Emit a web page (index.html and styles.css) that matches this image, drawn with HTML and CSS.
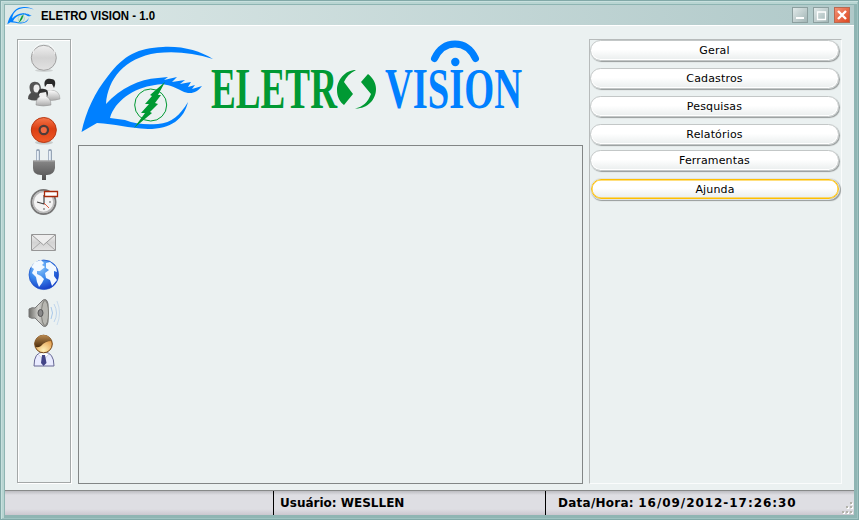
FILE: index.html
```html
<!DOCTYPE html>
<html lang="pt-BR">
<head>
<meta charset="utf-8">
<title>ELETRO VISION - 1.0</title>
<link rel="stylesheet" href="styles.css">
</head>
<body>
<svg class="defs" width="0" height="0" aria-hidden="true">
  <defs>
    <linearGradient id="silver" x2="0" y2="1"><stop stop-color="#efefef"/><stop offset=".5" stop-color="#d3d3d3"/><stop offset="1" stop-color="#e2e2e2"/></linearGradient>
    <linearGradient id="red" x2="0" y2="1"><stop stop-color="#f5764a"/><stop offset=".45" stop-color="#dc4014"/><stop offset="1" stop-color="#ef5a28"/></linearGradient>
    <linearGradient id="dark" x2="0" y2="1"><stop stop-color="#888"/><stop offset="1" stop-color="#505050"/></linearGradient>
    <linearGradient id="shirt" x2="0" y2="1"><stop stop-color="#fff"/><stop offset="1" stop-color="#aaa"/></linearGradient>
    <linearGradient id="metal"><stop stop-color="#6c6c68"/><stop offset=".5" stop-color="#d0d0cc"/><stop offset="1" stop-color="#84847e"/></linearGradient>
    <radialGradient id="ocean" cx=".35" cy=".25" r=".8"><stop stop-color="#8fc8fa"/><stop offset=".5" stop-color="#3a88ec"/><stop offset="1" stop-color="#1238c4"/></radialGradient>
    <radialGradient id="skin" cx=".5" cy=".85" r=".8"><stop stop-color="#fff0b8"/><stop offset="1" stop-color="#dd8b35"/></radialGradient>
    <linearGradient id="hair" x2="0" y2="1"><stop stop-color="#b98a50"/><stop offset="1" stop-color="#4c2c0b"/></linearGradient>
    <symbol id="eye" viewBox="80 44 134 90">
      <path fill="#0080ff" d="M81.500 132C86 111 95 92 108 76C124 55 138 48 163 47C183 46 200 51 213 59C194 53 176 51 157 53C124 58 108 79 106 104C121 88 139 79 158 78L168 77L164 80L177 77L172 82L185 80L180 84L191 82L188 87L195 85L192 89L202 86C197 93 190 95 182 91C172 86 164 83 155 85C133 88 115 101 110 118L125 120C135 124 146 125 158 124C172 123 180 115 188 102C184 119 171 129 148 129C128 128 115 124 97 123Z"/>
      <circle cx="150.700" cy="105" r="16" fill="none" stroke="#009933"/>
      <path fill="#009933" d="M165 82L158 95L161 95L155 103L158 104L150 112L152 113L134 128L145 113L141 113L149 104L145 104L152 96L150 95Z"/>
    </symbol>
  </defs>
</svg>
<div class="window">
  <header class="titlebar">
    <svg class="app-icon" width="27" height="19"><use href="#eye"/></svg>
    <svg class="title" width="118" height="20"><text x="1" y="15" textLength="114" lengthAdjust="spacingAndGlyphs">ELETRO VISION - 1.0</text></svg>
    <div class="controls">
      <button aria-label="Minimizar"><svg width="16" height="16"><path d="M4 11H12" stroke="#fff" stroke-width="2"/></svg></button>
      <button aria-label="Maximizar"><svg width="16" height="16"><path d="M4.500 5H12.500V12.500H4.500Z" fill="none" stroke="#fff" stroke-width="1.300"/></svg></button>
      <button class="close" aria-label="Fechar"><svg width="16" height="16"><path d="M4 4L12 12M12 4L4 12" stroke="#fff" stroke-width="2.400"/></svg></button>
    </div>
  </header>
  <main>
    <nav class="tools">
      <svg height="35" viewBox="18 40 52 35"><ellipse cx="44" cy="70.5" rx="9" ry="1.5" fill="#cfd3d3"/><circle cx="43.8" cy="57.8" r="12.5" fill="url(#silver)" stroke="#a0a0a0"/><path d="M33 54A11 11 0 0 1 55 54" fill="none" stroke="#fff" opacity=".7"/></svg>
      <svg height="35" viewBox="18 75 52 35">
        <path d="M28 99Q28 92 35 92Q41 92 41 99Q35 102 28 99Z" fill="#4d4d4d"/><path d="M31 93C27 84 32 81 36 82C41 82 42 89 40 94Z" fill="#555"/><ellipse cx="36.5" cy="88.500" rx="3" ry="4" fill="#eee"/>
        <path d="M42 99Q42 90 50 90Q60 90 60 99Q52 102 42 99Z" fill="url(#shirt)" stroke="#999" stroke-width=".5"/><circle cx="50" cy="86" r="4.500" fill="#eee"/><path d="M45 87C43 80 47 78 51 79C56 79 56 84 54 88L52 84L47 84Z" fill="#292929"/>
        <path d="M36 105Q36 96 43 96Q51 96 51 105Q43 107 36 105Z" fill="url(#shirt)" stroke="#888" stroke-width=".5"/><circle cx="43" cy="94" r="4" fill="#f0f0f0"/><path d="M38.500 95C37 89 41 88 44 89C48 89 49 93 47 97L46 92L40 93Z" fill="#333"/>
      </svg>
      <svg height="37" viewBox="18 110 52 37"><ellipse cx="44" cy="142.500" rx="9" ry="2" fill="#c7cccc"/><circle cx="43.800" cy="130" r="12.500" fill="url(#red)" stroke="#b73712"/><circle cx="43.800" cy="130" r="4.200" fill="#ef6b43" stroke="#4c3c3a" stroke-width="2.200"/></svg>
      <svg height="36" viewBox="18 147 52 36"><path d="M38 162V151M50 162V151" stroke="#96a5b6" stroke-width="4" stroke-linecap="round"/><path d="M37.800 162V151M49.800 162V151" stroke="#e8f0f8" stroke-width="2"/><path d="M33 160.500H55V168Q54 175 47 175H46V180H42V175H41Q33 175 33 168Z" fill="url(#dark)"/><path d="M33.500 161H54.500" stroke="#aaa"/></svg>
      <svg height="40" viewBox="18 183 52 40"><circle cx="43.500" cy="202" r="12" fill="#eee" stroke="#777" stroke-width="2"/><circle cx="43.500" cy="202" r="10.400" fill="#f4f4f4" stroke="#bbb" stroke-width="1.500"/><path d="M44 195V204L37 202" fill="none" stroke="#444" stroke-width="1.200"/><path d="M44 203L49 208" stroke="#e05b40"/><path d="M43 208H45V210H43ZM49 201H51V203H49Z" fill="#aaa"/><path d="M44.500 191.500H57.500V196.500H44.500Z" fill="#fff" stroke="#a82a0a" stroke-width="1.300"/></svg>
      <svg height="34" viewBox="18 223 52 34"><path d="M31.500 234.500H55.500V250.500H31.500Z" fill="url(#silver)" stroke="#969696"/><path d="M32 250L41 242M55 250L46 242" stroke="#aaa"/><path d="M32 235L43.500 245L55 235" fill="#eee" stroke="#9a9a9a"/></svg>
      <svg height="36" viewBox="18 257 52 36"><circle cx="43.800" cy="274.800" r="14.800" fill="url(#ocean)" stroke="#1c52c8" stroke-width=".7"/><path d="M31 267L35 262L41 260L44 263L42 265L45 267L40 271L37 271L37 274L41 276L44 279L42 283L39 287L37 282L36 277L32 273L34 269ZM46 263L50 262L56 267L57 272L54 271L54 276L57 280L52 286L50 280L46 278L45 273L49 270L46 268Z" fill="#f3f9ff"/></svg>
      <svg height="38" viewBox="18 293 52 38"><path d="M29 309Q32 307 35 308L43 300Q47 298 48 304V322Q47 328 43 326L35 318Q31 319 29 317Z" fill="url(#metal)" stroke="#777"/><ellipse cx="45" cy="313" rx="3.500" ry="12.500" fill="#b7b7b1" stroke="#80807a"/><ellipse cx="40.500" cy="313" rx="2.500" ry="3.500" fill="#888" stroke="#555"/><g fill="none" stroke="#a9c8ea"><path d="M51 307Q54 313 51 319" /><path d="M54 304Q59 313 54 322" opacity=".7"/><path d="M57 301Q62 313 57 325" opacity=".5"/></g></svg>
      <svg height="39" viewBox="18 331 52 39"><path d="M34 366Q34 352 43.500 352Q54 352 54 366Z" fill="#e9ebff" stroke="#666794"/><path d="M38 354L43.500 360L49 354L43.500 352Z" fill="#fff" stroke="#aaaec7" stroke-width=".5"/><path d="M42 355H45L46.500 363L43.500 366L41 363Z" fill="#424487"/><circle cx="43.500" cy="344" r="8.800" fill="url(#skin)" stroke="#744414"/><path d="M34.600 343A9 9 0 0 1 52 341Q45 341 41 346Q38 348 35.500 347Z" fill="url(#hair)"/></svg>
    </nav>
    <section class="center">
      <svg class="logo" width="505" height="106" viewBox="78 39 505 106">
        <use href="#eye" x="80" y="44" width="134" height="90"/>
        <g class="wordmark">
          <text class="green" x="211" y="108" textLength="126" lengthAdjust="spacingAndGlyphs">ELETR</text>
          <text class="blue" x="385" y="108" textLength="137" lengthAdjust="spacingAndGlyphs">VISION</text>
        </g>
        <path fill="#009933" d="M356 70C345 70 337 80 337 90C337 97 340 102 344 105L353 94L344 82C346 77 350 73 356 70ZM368 74L361 82L371 94C368 102 363 107 355 108.500C367 109 376 100 376 89C376 83 373 78 368 74Z"/>
        <path d="M434.500 58.500C439 49 446 44 455 44S471 49 475.500 58.500" fill="none" stroke="#0080ff" stroke-width="7" stroke-linecap="round"/>
        <circle cx="455.300" cy="62" r="4.200" fill="#0080ff"/>
      </svg>
      <div class="canvas"></div>
    </section>
    <aside class="menu">
      <button>Geral</button>
      <button>Cadastros</button>
      <button>Pesquisas</button>
      <button>Relatórios</button>
      <button class="tight">Ferramentas</button>
      <button class="focused">Ajunda</button>
    </aside>
  </main>
  <footer>
    <div class="cell"></div>
    <div class="cell user"><span>Usuário: WESLLEN</span></div>
    <div class="cell date">Data/Hora: <span class="stamp">16/09/2012-17:26:30</span></div>
    <svg class="grip" width="13" height="14"><path fill="#fff" d="M10 2h2v2h-2zM6 6h2v2h-2zM10 6h2v2h-2zM2 11h2v2h-2zM6 11h2v2h-2zM10 11h2v2h-2z"/><path fill="#b2b2aa" d="M9 1h2v2h-2zM5 5h2v2h-2zM9 5h2v2h-2zM1 10h2v2h-2zM5 10h2v2h-2zM9 10h2v2h-2z"/></svg>
  </footer>
</div>
</body>
</html>
```
FILE: styles.css
```css
* { box-sizing: border-box; }
body { margin: 0; font-family: "DejaVu Sans", Verdana, sans-serif; }
svg { display: block; flex: none; }
.defs { position: absolute; }
button { font: inherit; padding: 0; }

.window {
  width: 859px;
  height: 520px;
  padding: 4px;
  background: #add0cd;
  border: 1px solid #82a9a8;
  box-shadow: inset 1px 1px #c8e0de, inset -1px -1px #9fc3c1, inset 3px 3px #b8d5d2, inset 4px 4px #8fb5b3, inset -4px -4px #8fb5b3;
  display: flex;
  flex-direction: column;
}
.titlebar {
  height: 20px;
  flex: none;
  display: flex;
  align-items: center;
  padding: 0 4px 0 2px;
  background: linear-gradient(90deg, #dce8e7, #b0c9c9);
}
.app-icon { width: 27px; }
.title { margin-left: 6px; font: bold 12px "Liberation Sans", Arial, sans-serif; overflow: visible; }
.controls { margin-left: auto; display: flex; gap: 5px; }
.controls button {
  width: 16px;
  height: 16px;
  border: 0;
  box-shadow: inset 0 0 0 1px #8c9f9f;
  background: linear-gradient(135deg, #e4ecec, #9eb2b2);
}
.controls .close { background: linear-gradient(135deg, #f4977b, #dc431b); box-shadow: inset 0 0 0 1px #b8684f; }

main {
  height: 465px;
  flex: none;
  display: flex;
  align-items: flex-start;
  padding: 13px 12px 0;
  background: #ebf1f1;
  border-top: 1px solid #fff;
}
.tools {
  width: 54px;
  height: 444px;
  flex: none;
  border: 1px solid #a4a8a8;
  box-shadow: 1px 1px #fff, inset 1px 1px #fff;
}
.tools svg { width: 52px; }
.center { width: 505px; margin-left: 7px; flex: none; }
.wordmark { font: bold 58px "Liberation Serif", "Times New Roman", serif; }
.green { fill: #009933; }
.blue { fill: #0080ff; }
.canvas { height: 339px; border: 1px solid #828686; }
.menu {
  width: 253px;
  height: 445px;
  margin-left: 6px;
  flex: none;
  border: 1px solid;
  border-color: #b7bbbb #fafcfc #fafcfc #b7bbbb;
  display: flex;
  flex-direction: column;
}
.menu button {
  width: 249px;
  height: 21px;
  flex: none;
  margin-bottom: 7px;
  border: 1px solid #c3c7c7;
  border-radius: 11px;
  background: linear-gradient(#fff 45%, #eaeeee);
  box-shadow: inset 0 0 0 1px #fff, 1px 1px 1px #969b9b;
  font-size: 11px;
  line-height: 19px;
  letter-spacing: .15px;
  color: #000;
}
.menu .tight { margin-top: -2px; }
.menu .focused {
  width: 248px;
  height: 20px;
  margin: 1px 0 0 1px;
  border: 1.5px solid #ffbf00;
  outline: 1px solid #dfe3e3;
  line-height: 17px;
  box-shadow: inset 0 0 0 .5px #ffbf00, 1px 1px 1px 1px #969b9b;
}

footer {
  height: 25px;
  flex: none;
  display: flex;
  border-top: 1px solid #878989;
  background: linear-gradient(#bcbcc1, #dedee3 4px, #dedee3 18px, #cbc7cf);
  font-size: 12px;
  font-weight: bold;
  line-height: 24px;
  white-space: nowrap;
}
.cell { width: 268px; }
.user { width: 272px; border-left: 1px solid #000; padding-left: 6px; }
.date { width: 296px; border-left: 1px solid #000; padding-left: 12px; letter-spacing: .25px; }
.stamp { letter-spacing: .95px; }
.grip { margin: 10px 0 0; }
```
